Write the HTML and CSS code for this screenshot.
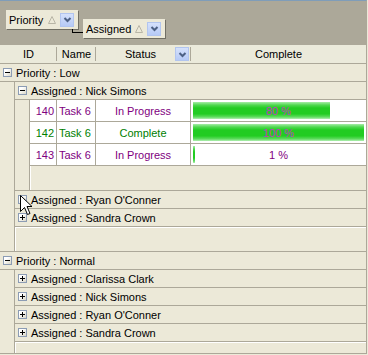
FILE: index.html
```html
<!DOCTYPE html>
<html>
<head>
<meta charset="utf-8">
<title>grid</title>
<link rel="stylesheet" href="styles.css">
</head>
<body>
<div class="grid">
	<div class="groupby">
		<div class="gb-box gb-priority">
			<span class="gb-text">Priority</span>
			<svg class="sort" width="8" height="8" viewBox="0 0 8 8"><path d="M4 0.5 L7.5 7.5 H0.5 Z"/></svg>
			<span class="dd"><svg width="11" height="11" viewBox="0 0 11 11"><path d="M2.5 4 L5.5 7 L8.5 4"/></svg></span>
		</div>
		<span class="gb-link"></span>
		<div class="gb-box gb-assigned">
			<span class="gb-text">Assigned</span>
			<svg class="sort" width="8" height="8" viewBox="0 0 8 8"><path d="M4 0.5 L7.5 7.5 H0.5 Z"/></svg>
			<span class="dd"><svg width="11" height="11" viewBox="0 0 11 11"><path d="M2.5 4 L5.5 7 L8.5 4"/></svg></span>
		</div>
	</div>
	<div class="head">
		<div class="hc c-id">ID</div>
		<div class="hc c-name">Name</div>
		<div class="hc c-status"><span class="hc-label">Status</span><span class="dd"><svg width="11" height="11" viewBox="0 0 11 11"><path d="M2.5 4 L5.5 7 L8.5 4"/></svg></span></div>
		<div class="hc c-complete">Complete</div>
	</div>
	<div class="rows">
		<div class="group open">
			<div class="grow"><span class="exp minus"></span>Priority : Low</div>
			<div class="gbody">
				<div class="group open">
					<div class="grow"><span class="exp minus"></span>Assigned : Nick Simons</div>
					<div class="gbody">
						<div class="drow prog">
							<div class="dc c-id">140</div>
							<div class="dc c-name">Task 6</div>
							<div class="dc c-status">In Progress</div>
							<div class="dc c-complete"><div class="track"><span class="bar" style="width:80%"></span><span class="pct on">80 %</span></div></div>
						</div>
						<div class="drow done">
							<div class="dc c-id">142</div>
							<div class="dc c-name">Task 6</div>
							<div class="dc c-status">Complete</div>
							<div class="dc c-complete"><div class="track"><span class="bar" style="width:100%"></span><span class="pct on">100 %</span></div></div>
						</div>
						<div class="drow prog">
							<div class="dc c-id">143</div>
							<div class="dc c-name">Task 6</div>
							<div class="dc c-status">In Progress</div>
							<div class="dc c-complete"><div class="track"><span class="bar" style="width:1%"></span><span class="pct">1 %</span></div></div>
						</div>
						<div class="gfoot foot-rows"></div>
					</div>
				</div>
				<div class="group"><div class="grow"><span class="exp plus"></span>Assigned : Ryan O'Conner</div></div>
				<div class="group"><div class="grow"><span class="exp plus"></span>Assigned : Sandra Crown</div></div>
				<div class="gfoot foot-groups"></div>
			</div>
		</div>
		<div class="group open">
			<div class="grow"><span class="exp minus"></span>Priority : Normal</div>
			<div class="gbody">
				<div class="group"><div class="grow"><span class="exp plus"></span>Assigned : Clarissa Clark</div></div>
				<div class="group"><div class="grow"><span class="exp plus"></span>Assigned : Nick Simons</div></div>
				<div class="group"><div class="grow"><span class="exp plus"></span>Assigned : Ryan O'Conner</div></div>
				<div class="group"><div class="grow"><span class="exp plus"></span>Assigned : Sandra Crown</div></div>
				<div class="gfoot foot-last"></div>
			</div>
		</div>
	</div>
</div>
<svg class="cursor" width="13" height="21" viewBox="0 0 13 21"><path d="M0.5 0.5 L0.5 16.5 L4.5 12.5 L7.5 19.5 L10 18.5 L7 11.5 L12 11.5 Z"/></svg>
</body>
</html>
```
FILE: styles.css
```css
*,*:before,*:after{
	box-sizing: border-box;
}
body{
	margin: 0;
	background: #ece9d8;
	font-family: "Liberation Sans", Arial, sans-serif;
	font-size: 11px;
	color: #000;
}
.grid{
	width: 367px;
	border-top: 1px solid #7f9db9;
	border-right: 1px solid #aca899;
	background: #ece9d8;
}

/* group-by area */
.groupby{
	height: 44px;
	background: #aca899;
	display: flex;
	align-items: flex-start;
	padding-left: 6px;
}
.gb-box{
	display: flex;
	align-items: center;
	height: 19px;
	background: #ece9d8;
	box-shadow: 1px 1px 0 #716f64;
	padding: 0 4px 0 3px;
}
.gb-priority{
	margin-top: 9px;
	width: 72px;
}
.gb-assigned{
	margin-top: 18px;
	width: 82px;
}
.gb-text{
	flex: 1;
}
.sort{
	margin-right: 4px;
}
.sort path{
	fill: none;
	stroke: #b8b5a6;
}
.gb-link{
	width: 11px;
	height: 4px;
	margin: 28px 0 0 -6px;
	border-left: 1px solid #000;
	border-bottom: 1px solid #000;
}
.dd{
	display: flex;
	align-items: center;
	justify-content: center;
	width: 14px;
	height: 14px;
	background: linear-gradient(#d5e1fc, #b6caf6);
	border: 1px solid #b2c5ef;
}
.dd path{
	fill: none;
	stroke: #4d6185;
	stroke-width: 2;
}

/* column header */
.head{
	display: flex;
	height: 19px;
	background: #ebeadb;
	border-bottom: 1px solid #aca899;
}
.hc{
	display: flex;
	align-items: center;
	justify-content: center;
	background: linear-gradient(#aca899, #aca899) right 2px / 1px 14px no-repeat;
}
.hc.c-id{ width: 57px; }
.hc.c-name{ width: 39px; }
.hc.c-status{ width: 95px; padding-left: 10px; }
.hc.c-status .hc-label{ flex: 1; text-align: center; }
.hc.c-status .dd{ margin-right: 2px; }
.hc.c-complete{ flex: 1; background: none; }

/* groups */
.grow{
	display: flex;
	align-items: center;
	height: 18px;
	border-bottom: 1px solid #aca899;
}
.group.open{
	border-bottom: 1px solid #aca899;
}
.gbody{
	margin-left: 14px;
	border-left: 1px solid #aca899;
}
.exp{
	position: relative;
	width: 9px;
	height: 9px;
	margin: 0 4px 0 3px;
	border: 1px solid #8c9cb4;
	background: linear-gradient(135deg, #fff 30%, #d9d6c6);
}
.exp:before,
.exp.plus:after{
	content: "";
	position: absolute;
	background: #000;
}
.exp:before{
	left: 1px;
	top: 3px;
	width: 5px;
	height: 1px;
}
.exp.plus:after{
	left: 3px;
	top: 1px;
	width: 1px;
	height: 5px;
}
.gfoot{
	border-left: 1px solid #fff;
}
.foot-rows{ height: 24px; }
.foot-groups{ height: 24px; border-top: 1px solid #fff; }
.foot-last{ height: 11px; border-top: 1px solid #fff; }

/* data rows */
.drow{
	display: flex;
	height: 22px;
	background: #fff;
	border-bottom: 1px solid #aca899;
}
.drow.prog{ color: #800080; }
.drow.done{ color: #008000; }
.dc{
	display: flex;
	align-items: center;
	border-right: 1px solid #aca899;
}
.dc.c-id{ width: 27px; justify-content: flex-end; padding-right: 2px; }
.dc.c-name{ width: 39px; padding-left: 2px; }
.dc.c-status{ width: 95px; justify-content: center; }
.dc.c-complete{ flex: 1; border-right: 0; padding: 2px; }
.track{
	flex: 1;
	height: 17px;
	display: grid;
}
.bar,
.pct{
	grid-area: 1 / 1;
}
.bar{
	height: 17px;
	background: linear-gradient(#a6eca6, #4fd84f 18%, #22cc22 35%, #22cc22 70%, #5fdc5f 88%, #b3efb3);
}
.pct{
	justify-self: center;
	align-self: center;
}
.pct.on{
	color: #c03cc0;
}

.cursor{
	position: absolute;
	left: 20px;
	top: 195px;
}
.cursor path{
	fill: #fff;
	stroke: #000;
}
```
